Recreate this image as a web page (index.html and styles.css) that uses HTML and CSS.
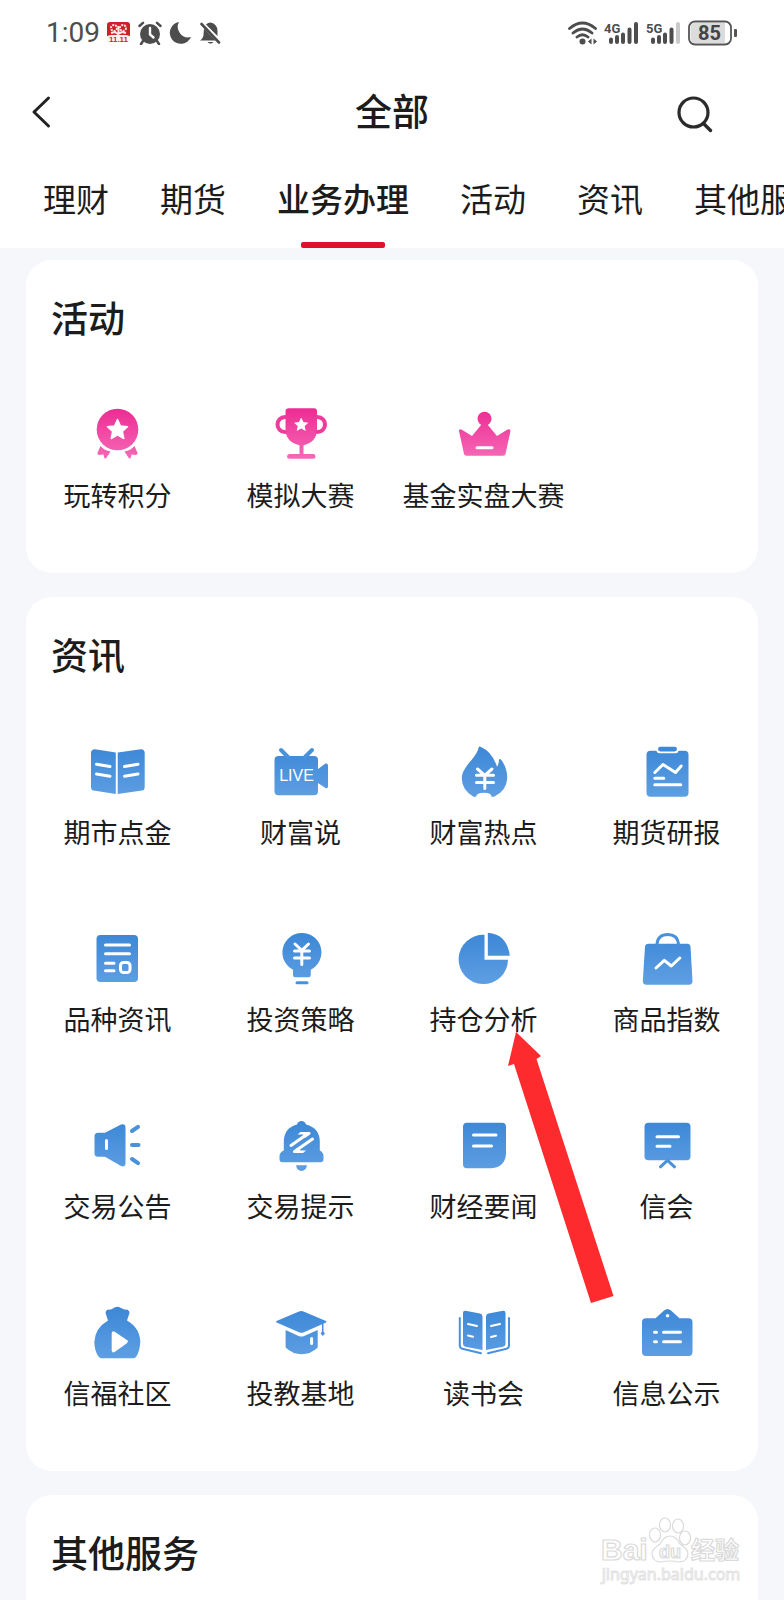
FILE: index.html
```html
<!DOCTYPE html>
<html lang="zh-CN">
<head>
<meta charset="utf-8">
<meta name="viewport" content="width=device-width, initial-scale=1">
<title>全部</title>
<link rel="stylesheet" href="styles.css">
</head>
<body>
<svg class="defs" aria-hidden="true">
  <defs>
    <linearGradient id="blue" gradientUnits="userSpaceOnUse" x1="0" y1="0" x2="0" y2="54"><stop offset="0" stop-color="#3a86d6"/><stop offset="1" stop-color="#5f9fe3"/></linearGradient>
    <linearGradient id="pink" gradientUnits="userSpaceOnUse" x1="0" y1="0" x2="0" y2="54"><stop offset="0" stop-color="#ec2a92"/><stop offset="1" stop-color="#f66cb8"/></linearGradient>
  </defs>
</svg>
<div class="app">
  <div class="status">
    <div class="status-group">
      <span class="clock">1:09</span>
      <svg width="24" height="24" viewBox="0 0 24 24"><path d="M3 1h17a3 3 0 0 1 3 3v11H0V4a3 3 0 0 1 3-3z" fill="#cf1f28"/><g fill="none" stroke="#fbe6e2" stroke-width="2"><circle cx="7" cy="7" r="3" stroke-dasharray="2 1"/><circle cx="16" cy="7" r="3" stroke-dasharray="2 1"/><path d="M4 12l4-1 3 2 4-2 4 1M11.500 5v8"/></g><path d="M0 15l4-1h15l4 1v6H0z" fill="#fff3ee"/><text x="11.500" y="21" class="badge-text">11.11</text></svg>
      <svg width="24" height="24" viewBox="0 0 24 24"><circle cx="12" cy="13" r="10" fill="#4d4d4d"/><path d="M1.500 5L5 1.800M22.500 5L19 1.800M5 20l-2 3M19 20l2 3" stroke="#4d4d4d" stroke-width="2.500" stroke-linecap="round"/><path d="M12 7v6.500l3.500 3" fill="none" stroke="#fff" stroke-width="2.400" stroke-linecap="round"/></svg>
      <svg width="24" height="24" viewBox="0 0 24 24"><path d="M10 1A11 11 0 1 0 22 16A10.500 10.500 0 0 1 10 1z" fill="#4d4d4d"/></svg>
      <svg width="22" height="24" viewBox="0 0 22 24"><path d="M6 3.500Q8 1.500 10.500 1.500Q17.500 3 17.500 10v5zM4 7.500L15.500 19.500H0q3.500-2.500 3.500-6zM7.500 21h6q-3 3-6 0z" fill="#4d4d4d"/><path d="M1.500 3l17.500 18.500" stroke="#4d4d4d" stroke-width="2.600" stroke-linecap="round"/></svg>
    </div>
    <div class="status-group end">
      <svg width="30" height="24" viewBox="0 0 30 24"><g fill="none" stroke="#4d4d4d" stroke-width="2.800" stroke-linecap="round"><path d="M1.500 7.500Q14.500-3.500 27.500 7.500M5 12Q14.500 4 24 12M9 16Q14.500 11.500 20 16"/></g><circle cx="14.500" cy="20.500" r="3" fill="#4d4d4d"/><path d="M20 20.500l3.500-3v6zM29 20.500l-3.500-3v6z" fill="#4d4d4d"/></svg>
      <svg width="36" height="24" viewBox="0 0 36 24"><text x="0" y="12" class="net-text">4G</text><path d="M7 18.500v2.500M13 16v5M19 13.500v7.500M25.500 8.500v12.500M32 3v18" stroke="#4d4d4d" stroke-width="4" stroke-linecap="round"/></svg>
      <svg width="36" height="24" viewBox="0 0 36 24"><text x="0" y="12" class="net-text">5G</text><path d="M7 18.500v2.500M13 16v5M19 13.500v7.500M25.500 8.500v12.500" stroke="#4d4d4d" stroke-width="4" stroke-linecap="round"/><path d="M32 3v18" stroke="#c9c9c9" stroke-width="4" stroke-linecap="round"/></svg>
      <svg width="50" height="26" viewBox="0 0 50 26"><rect x="1" y="1.500" width="42" height="23" rx="6" fill="#fff" stroke="#555" stroke-width="1.800"/><path d="M7 3h30v20H7q-4.500 0-4.500-4.500v-11Q2.500 3 7 3z" fill="#dcdcdc"/><rect x="46" y="9" width="3" height="8" rx="1" fill="#555"/><text x="21.500" y="20" class="battery-text">85</text></svg>
    </div>
  </div>

  <header class="header">
    <button class="icon-button" type="button" aria-label="返回"><svg width="28" height="38" viewBox="0 0 28 38"><path d="M20.500 7L6 21L20.500 35" fill="none" stroke="#222" stroke-width="3" stroke-linecap="round" stroke-linejoin="round"/></svg></button>
    <h1 class="page-title">全部</h1>
    <button class="icon-button search" type="button" aria-label="搜索"><svg width="38" height="38" viewBox="0 0 38 38"><circle cx="17.500" cy="21.500" r="14.500" fill="none" stroke="#2b2b2b" stroke-width="3.200"/><path d="M27.500 32.500l7 7" stroke="#2b2b2b" stroke-width="3.400" stroke-linecap="round"/></svg></button>
  </header>

  <nav class="tabs">
    <a class="tab" href="#">理财</a>
    <a class="tab" href="#">期货</a>
    <a class="tab active" href="#" aria-current="page">业务办理</a>
    <a class="tab" href="#">活动</a>
    <a class="tab" href="#">资讯</a>
    <a class="tab" href="#">其他服务</a>
  </nav>

  <main class="content">
    <section class="card">
      <h2 class="card-title">活动</h2>
      <div class="grid">
        <a class="item" href="#"><svg class="icon pink" viewBox="0 0 54 54"><circle cx="26.500" cy="22.500" r="20.800"/><path d="M9.500 39q4 4.500 10 5.500l-4.500 7q-1.500.5-2-1.500l-.5-2.500-4.500.5q-2-.5-1.500-2zM43.500 39q-4 4.500-10 5.500l4.500 7q1.500.5 2-1.500l.5-2.500 4.500.5q2-.5 1.500-2z"/><path class="w" stroke="#fff" stroke-width="1.500" stroke-linejoin="round" d="M26.500 12.500l3 6.500 7 .8-5.200 4.700 1.500 7-6.300-3.600-6.300 3.600 1.500-7-5.200-4.700 7-.8z"/></svg><span>玩转积分</span></a>
        <a class="item" href="#"><svg class="icon pink" viewBox="0 0 54 54"><path d="M15 1.300h25q3 0 3 3V22q0 13-13.500 16.300V47H39q2.500 0 2.500 2.400T39 51.700H15.500Q13 51.700 13 49.400T15.500 47h10v-8.700Q11.500 35 11.500 22V4.300q0-3 3.500-3z"/><path class="p" d="M11 10a7.500 7.500 0 0 0 0 15M43.500 10a7.500 7.500 0 0 1 0 15"/><path class="w" d="M27.200 10.500l2.200 4.600 5 .6-3.700 3.400 1 5-4.500-2.500-4.500 2.500 1-5-3.700-3.400 5-.6z"/></svg><span>模拟大赛</span></a>
        <a class="item" href="#"><svg class="icon pink" viewBox="0 0 54 54"><circle cx="27.500" cy="11.700" r="7"/><path d="M27.500 16q2 0 3 1.500L40 29l10.500-6.500q3-1 3 1.500L48.500 47q-.5 1.700-2.500 1.700H9.500q-2 0-2.500-1.700L2 24q0-2.500 2.500-1.500L15 29l9.500-11.500q1-1.500 3-1.500z"/><path class="l" d="M20 40.700h15"/></svg><span>基金实盘大赛</span></a>
      </div>
    </section>

    <section class="card">
      <h2 class="card-title">资讯</h2>
      <div class="grid">
        <a class="item" href="#"><svg class="icon" viewBox="0 0 54 54"><path d="M4 5.300L24.800 8.500V50L2.500 46.500Q0 46 0 43.500V9Q0 5.500 4 5.300zM50 5.300L26.700 8.500V50l24.300-3.500q2.700-.5 2.700-3V9q0-3.500-3.700-3.700z"/><path class="l" d="M5.500 20.300l13.500 2.200M5.500 30l13.500 2.200M33.500 22.500L47 20.300M33.500 32.200L47 30"/></svg><span>期市点金</span></a>
        <a class="item" href="#"><svg class="icon" viewBox="0 0 54 54"><path d="M4.500 12h35.500a4 4 0 0 1 4 4v9l7.500-5.500q2.500-.5 2.500 2v21q0 2.500-2.500 1.500L44 39v8.300a4 4 0 0 1-4 4H4.500a4 4 0 0 1-4-4V16a4 4 0 0 1 4-4z"/><path class="p" d="M7 6l7 7M38 6l-7 7"/><text x="22.500" y="37" class="live">LIVE</text></svg><span>财富说</span></a>
        <a class="item" href="#"><svg class="icon" viewBox="0 0 54 54"><path d="M23.500 2.700Q35.500 8 40 22.700Q42 20 42 15.500q.8-1 2 0Q50.500 24 50.200 34.500Q49.500 47 37 52.700H34.500Q34.500 48.700 27 48.700T19 52.700H16.500Q5 46 4.800 34.500C5 22 19 15 21.500 4Q22 2 23.500 2.700z"/><path class="l" d="M20.500 25l7.300 6.300L35 25M19.500 31.300h17M19.500 38.500h17M27.800 31v13.500"/></svg><span>财富热点</span></a>
        <a class="item" href="#"><svg class="icon" viewBox="0 0 54 54"><rect x="6.500" y="6.700" width="42" height="46" rx="4"/><rect x="16.500" y="1" width="22" height="8.300" rx="3" class="w"/><rect x="18" y="2.700" width="19" height="4.800" rx="2.400"/><path class="l" d="M14.800 28.500l8.200-8 12.500 8 5.700-6.500M14.800 34.300h9M14.800 40.700h26"/></svg><span>期货研报</span></a>

        <a class="item" href="#"><svg class="icon" viewBox="0 0 54 54"><rect x="5.500" y="4" width="41.500" height="47" rx="4"/><path class="l" d="M14.500 14h24M14.500 22.700h24M14.500 32.300h8.500M14.500 39.700h8.500"/><rect x="29.500" y="31.500" width="9.500" height="10" rx="3" class="l"/></svg><span>品种资讯</span></a>
        <a class="item" href="#"><svg class="icon" viewBox="0 0 54 54"><path d="M27.800 2A19.400 19.400 0 0 1 36.800 38.700V44q0 2.300-2 2.300H21q-2 0-2-2.300V38.700A19.400 19.400 0 0 1 27.800 2z"/><path class="p thin" d="M23 51.700h10"/><path class="l" d="M21 13l6.800 6.300L34.500 13M20.500 20h15M20.500 27h15M27.800 20v13.500"/></svg><span>投资策略</span></a>
        <div class="item-wrap">
          <a class="item" href="#"><svg class="icon" viewBox="0 0 54 54"><path d="M27.500 3.700A24.700 24.700 0 1 0 51 28.700H27.500z"/><path d="M30.800 1.700Q50 3 52.800 24.700H30.800z"/></svg><span>持仓分析</span></a>
          <svg class="pointer" width="110" height="276" viewBox="0 0 110 276" aria-hidden="true"><path d="M8 0L33 24L28.500 27L105.500 264L83 271L6 32L0 34z" fill="#fd2b2d"/></svg>
        </div>
        <a class="item" href="#"><svg class="icon" viewBox="0 0 54 54"><path d="M8.500 12.700H47q3.300 0 3.500 3L52.500 50q0 3.700-3.700 3.700H6.500Q2.800 53.700 2.800 50L5 15.700q.3-3 3.500-3z"/><path class="p thin" d="M17 13q1-9.500 10.700-9.500T38.500 13"/><path class="l" d="M16 37l8.300-7.700 7 5.700 8.500-8"/></svg><span>商品指数</span></a>

        <a class="item" href="#"><svg class="icon" viewBox="0 0 54 54"><path d="M7 14.700h7L30 6.500q4.500-1 4.500 3V45q0 4.500-4.500 3L14 38.700H7q-3.500 0-3.500-3.500v-17q0-3.500 3.500-3.500z"/><path class="l" d="M15.500 22.500v8"/><path class="p" d="M41 13l6-4.200M41 27h6.500M41 41l6 4.200"/></svg><span>交易公告</span></a>
        <a class="item" href="#"><svg class="icon" viewBox="0 0 54 54"><path d="M27.500 3q3.500 0 4.500 3.500Q45.800 10 45.800 24v8.500q3.700 2 3.700 5.500v3.300q0 3-3 3h-38q-3 0-3-3V38q0-3.500 4.300-5.500V24Q9.800 10 23 6.500Q24 3 27.500 3zM22 47.300h11q-1 5.700-5.500 5.700T22 47.300z"/><path class="l" d="M17 27.500L34 15.500M38.500 21L22 32.500"/><path class="w" d="M23.500 16.500l3-2.500h9q2 1 .5 2.500l-5 3.500-2-3.500zM32 32.500l-3 2.500h-9q-2-1-.5-2.500l5-3.500 2 3.500z"/></svg><span>交易提示</span></a>
        <a class="item" href="#"><svg class="icon" viewBox="0 0 54 54"><path d="M10 4.700h35a4 4 0 0 1 4 4V36Q48 49 34.500 50.300H10a4 4 0 0 1-4-4V8.700a4 4 0 0 1 4-4z"/><path class="l" d="M16.500 17h22.500M16.500 28h18"/></svg><span>财经要闻</span></a>
        <a class="item" href="#"><svg class="icon" viewBox="0 0 54 54"><rect x="4.500" y="4.700" width="46" height="37.500" rx="4"/><path class="p thin" d="M20.500 48.800l7-6.500 7 6.500"/><path class="l" d="M17 18.700h21.500M17 28.300h13"/></svg><span>信会</span></a>

        <a class="item" href="#"><svg class="icon" viewBox="0 0 54 54"><path d="M22 3.500q4-3.500 9 0 2.500 1.500 5 1 3.500 1.500 2 5l-2 6Q49 23 49.300 37q-.5 9-4 14.500-1 1.800-3 1.800H10.500q-2 0-3-1.800Q3.500 46 3.300 37 4 23 17 15.500l-2-6q-1.500-3.500 2-5 3 .5 5-1z"/><path class="w" d="M20.700 28q.5-2.500 3-1.200l12.500 8.500q1.300 1.300 0 2.700l-12.500 9q-2.500 1.300-3-1.200z"/></svg><span>信福社区</span></a>
        <a class="item" href="#"><svg class="icon" viewBox="0 0 54 54"><path d="M25 6.500q2.300-1 4.500 0L52 16q1 .7 0 1.500L30 27.300q-2.500 1-5 0L2.500 17.500q-1-.8 0-1.500zM11.600 25l13 6q3 1 5.500 0l13.600-6v17.500q-7 6.800-16 6.800t-16.100-6.800z"/><path d="M49.500 17v9.500l1.500 2-2.200 2.500-2.200-2.500 1.400-2V17z"/><path class="l" d="M37.600 33.500v5"/></svg><span>投教基地</span></a>
        <a class="item" href="#"><svg class="icon" viewBox="0 0 54 54"><path d="M8.500 5.700L23 8.500q2.500.7 2.500 3V45L8.500 41.700Q6 41 6 39V8q0-2.500 2.500-2.300zM46 5.700L31.500 8.500q-2.500.7-2.500 3V45L46 41.700q2.500-.7 2.500-2.700V8q0-2.500-2.500-2.300z"/><path class="p fine" d="M2.800 13v27.500q0 2.500 2.500 3.300L24 48.300M52 13v27.500q0 2.500-2.500 3.300L31 48.300"/><path class="l fine" d="M11 19l9 2M11 30.500l5 1.200M34 21l9-2M34 32l5-1.200"/></svg><span>读书会</span></a>
        <a class="item" href="#"><svg class="icon" viewBox="0 0 54 54"><path d="M6 13.300h9.500L24 5.500q3.500-3 7 0l8.500 7.800H48.500a4 4 0 0 1 4 4V47a4 4 0 0 1-4 4H6a4 4 0 0 1-4-4V17.300a4 4 0 0 1 4-4z"/><circle cx="27.600" cy="10.700" r="1.800" class="w"/><path class="l" d="M14.500 27.300h2M23.500 27.300h17M14.500 36.700h2M23.500 36.700h17"/></svg><span>信息公示</span></a>
      </div>
    </section>

    <section class="card last">
      <h2 class="card-title">其他服务</h2>
      <svg class="watermark" width="144" height="76" viewBox="0 0 144 76" role="img" aria-label="Baidu 经验">
        <g fill="#fff" stroke="#dadada" stroke-width="1.200">
          <text x="2" y="46" class="wm-brand">Bai</text>
          <ellipse cx="56" cy="21" rx="5.500" ry="7"/><ellipse cx="66" cy="11" rx="5.500" ry="7"/><ellipse cx="79" cy="12" rx="5.500" ry="7"/><ellipse cx="86" cy="24" rx="5.500" ry="7"/>
          <path d="M71 22q6 0 10 8 8 5 8 10-1 8-9 8-9-2-18 0-8 0-9-8 0-5 8-10 4-8 10-8z"/>
          <text x="71" y="44" class="wm-du">du</text>
          <text x="92" y="45" class="wm-cn">经验</text>
        </g>
        <text x="72" y="66" class="wm-url">jingyan.baidu.com</text>
      </svg>
    </section>
  </main>
</div>
</body>
</html>
```

FILE: styles.css
```css
* { box-sizing: border-box; }

body {
  margin: 0;
  background: #f6f7fb;
  color: #1c1c1c;
  font-family: "Noto Sans CJK SC", sans-serif;
}

a { color: inherit; text-decoration: none; }

.defs { position: absolute; width: 0; height: 0; }

.app {
  display: flex;
  flex-direction: column;
  height: 100vh;
  overflow: hidden;
}

.status {
  display: flex;
  flex: none;
  align-items: center;
  justify-content: space-between;
  height: 66px;
  padding: 0 46px;
  background: #fff;
}

.status-group { display: flex; align-items: center; gap: 7px; }
.status-group.end { gap: 6px; }

.clock {
  color: #4d4d4d;
  font-family: Roboto, sans-serif;
  font-size: 28px;
  line-height: 32px;
}

.badge-text { fill: #cf1f28; font: bold 8px "Liberation Sans", sans-serif; text-anchor: middle; }
.net-text { fill: #4d4d4d; font: bold 13px Roboto, sans-serif; }
.battery-text { fill: #444; font: bold 20px Roboto, sans-serif; text-anchor: middle; }

.header {
  display: grid;
  flex: none;
  grid-template-columns: 1fr auto 1fr;
  align-items: center;
  height: 88px;
  padding: 0 28px;
  background: #fff;
}

.icon-button {
  display: flex;
  justify-self: start;
  padding: 0;
  border: 0;
  background: none;
}

.icon-button svg { overflow: visible; }
.search { justify-self: end; margin-right: 42px; }

.page-title {
  margin: 0;
  font-size: 37px;
  font-weight: 500;
  line-height: 48px;
}

.tabs {
  display: flex;
  flex: none;
  gap: 51px;
  height: 94px;
  padding-left: 43px;
  overflow: hidden;
  background: #fff;
}

.tab {
  display: flex;
  flex: none;
  flex-direction: column;
  align-items: center;
  justify-content: space-between;
  padding-top: 20px;
  font-size: 33px;
  line-height: 48px;
  white-space: nowrap;
}

.tab.active { font-weight: 500; }

.tab.active::after {
  content: "";
  width: 84px;
  height: 6px;
  border-radius: 2px;
  background: #e1102b;
}

.content {
  display: flex;
  flex: 1;
  flex-direction: column;
  gap: 24px;
  min-height: 0;
  padding: 12px 26px 0;
}

.card {
  flex: none;
  padding: 33px 0 60px;
  border-radius: 26px;
  background: #fff;
}

.card.last {
  position: relative;
  flex: 1 0 auto;
  padding-bottom: 0;
  border-radius: 26px 26px 0 0;
}

.card-title {
  margin: 0;
  padding-left: 25px;
  font-size: 37px;
  font-weight: 500;
  line-height: 48px;
}

.grid {
  display: grid;
  grid-template-columns: repeat(4, 1fr);
  row-gap: 81px;
  padding-top: 66px;
}

.item {
  display: flex;
  flex-direction: column;
  align-items: center;
  gap: 16px;
  font-size: 27px;
  line-height: 36px;
  white-space: nowrap;
}

.item-wrap { position: relative; }

.pointer {
  position: absolute;
  z-index: 1;
  top: 101px;
  left: 116px;
  pointer-events: none;
}

.icon {
  width: 54px;
  height: 54px;
  overflow: visible;
  fill: url(#blue);
  stroke-width: 3;
  stroke-linecap: round;
  stroke-linejoin: round;
}

.icon.pink { fill: url(#pink); }
.icon .w { fill: #fff; }
.icon .l { fill: none; stroke: #fff; }
.icon .p { fill: none; stroke: #4a91dc; stroke-width: 4; }
.icon.pink .p { stroke: #ef3b9b; }
.icon .p.thin { stroke-width: 3; }
.icon .fine { stroke-width: 2; }
.icon .p.fine { stroke-width: 2; }

.live {
  fill: #fff;
  font: 16px "Liberation Sans", sans-serif;
  text-anchor: middle;
}

.watermark { position: absolute; top: 19px; right: 15px; }
.wm-brand { font: bold 30px "Liberation Sans", sans-serif; }
.wm-du { font: bold 18px "Liberation Sans", sans-serif; text-anchor: middle; }
.wm-cn { font: bold 24px "Noto Sans CJK SC", sans-serif; }
.wm-url {
  fill: #fff;
  stroke: #e2e2e2;
  font: 16px "Noto Sans", sans-serif;
  text-anchor: middle;
}
```
